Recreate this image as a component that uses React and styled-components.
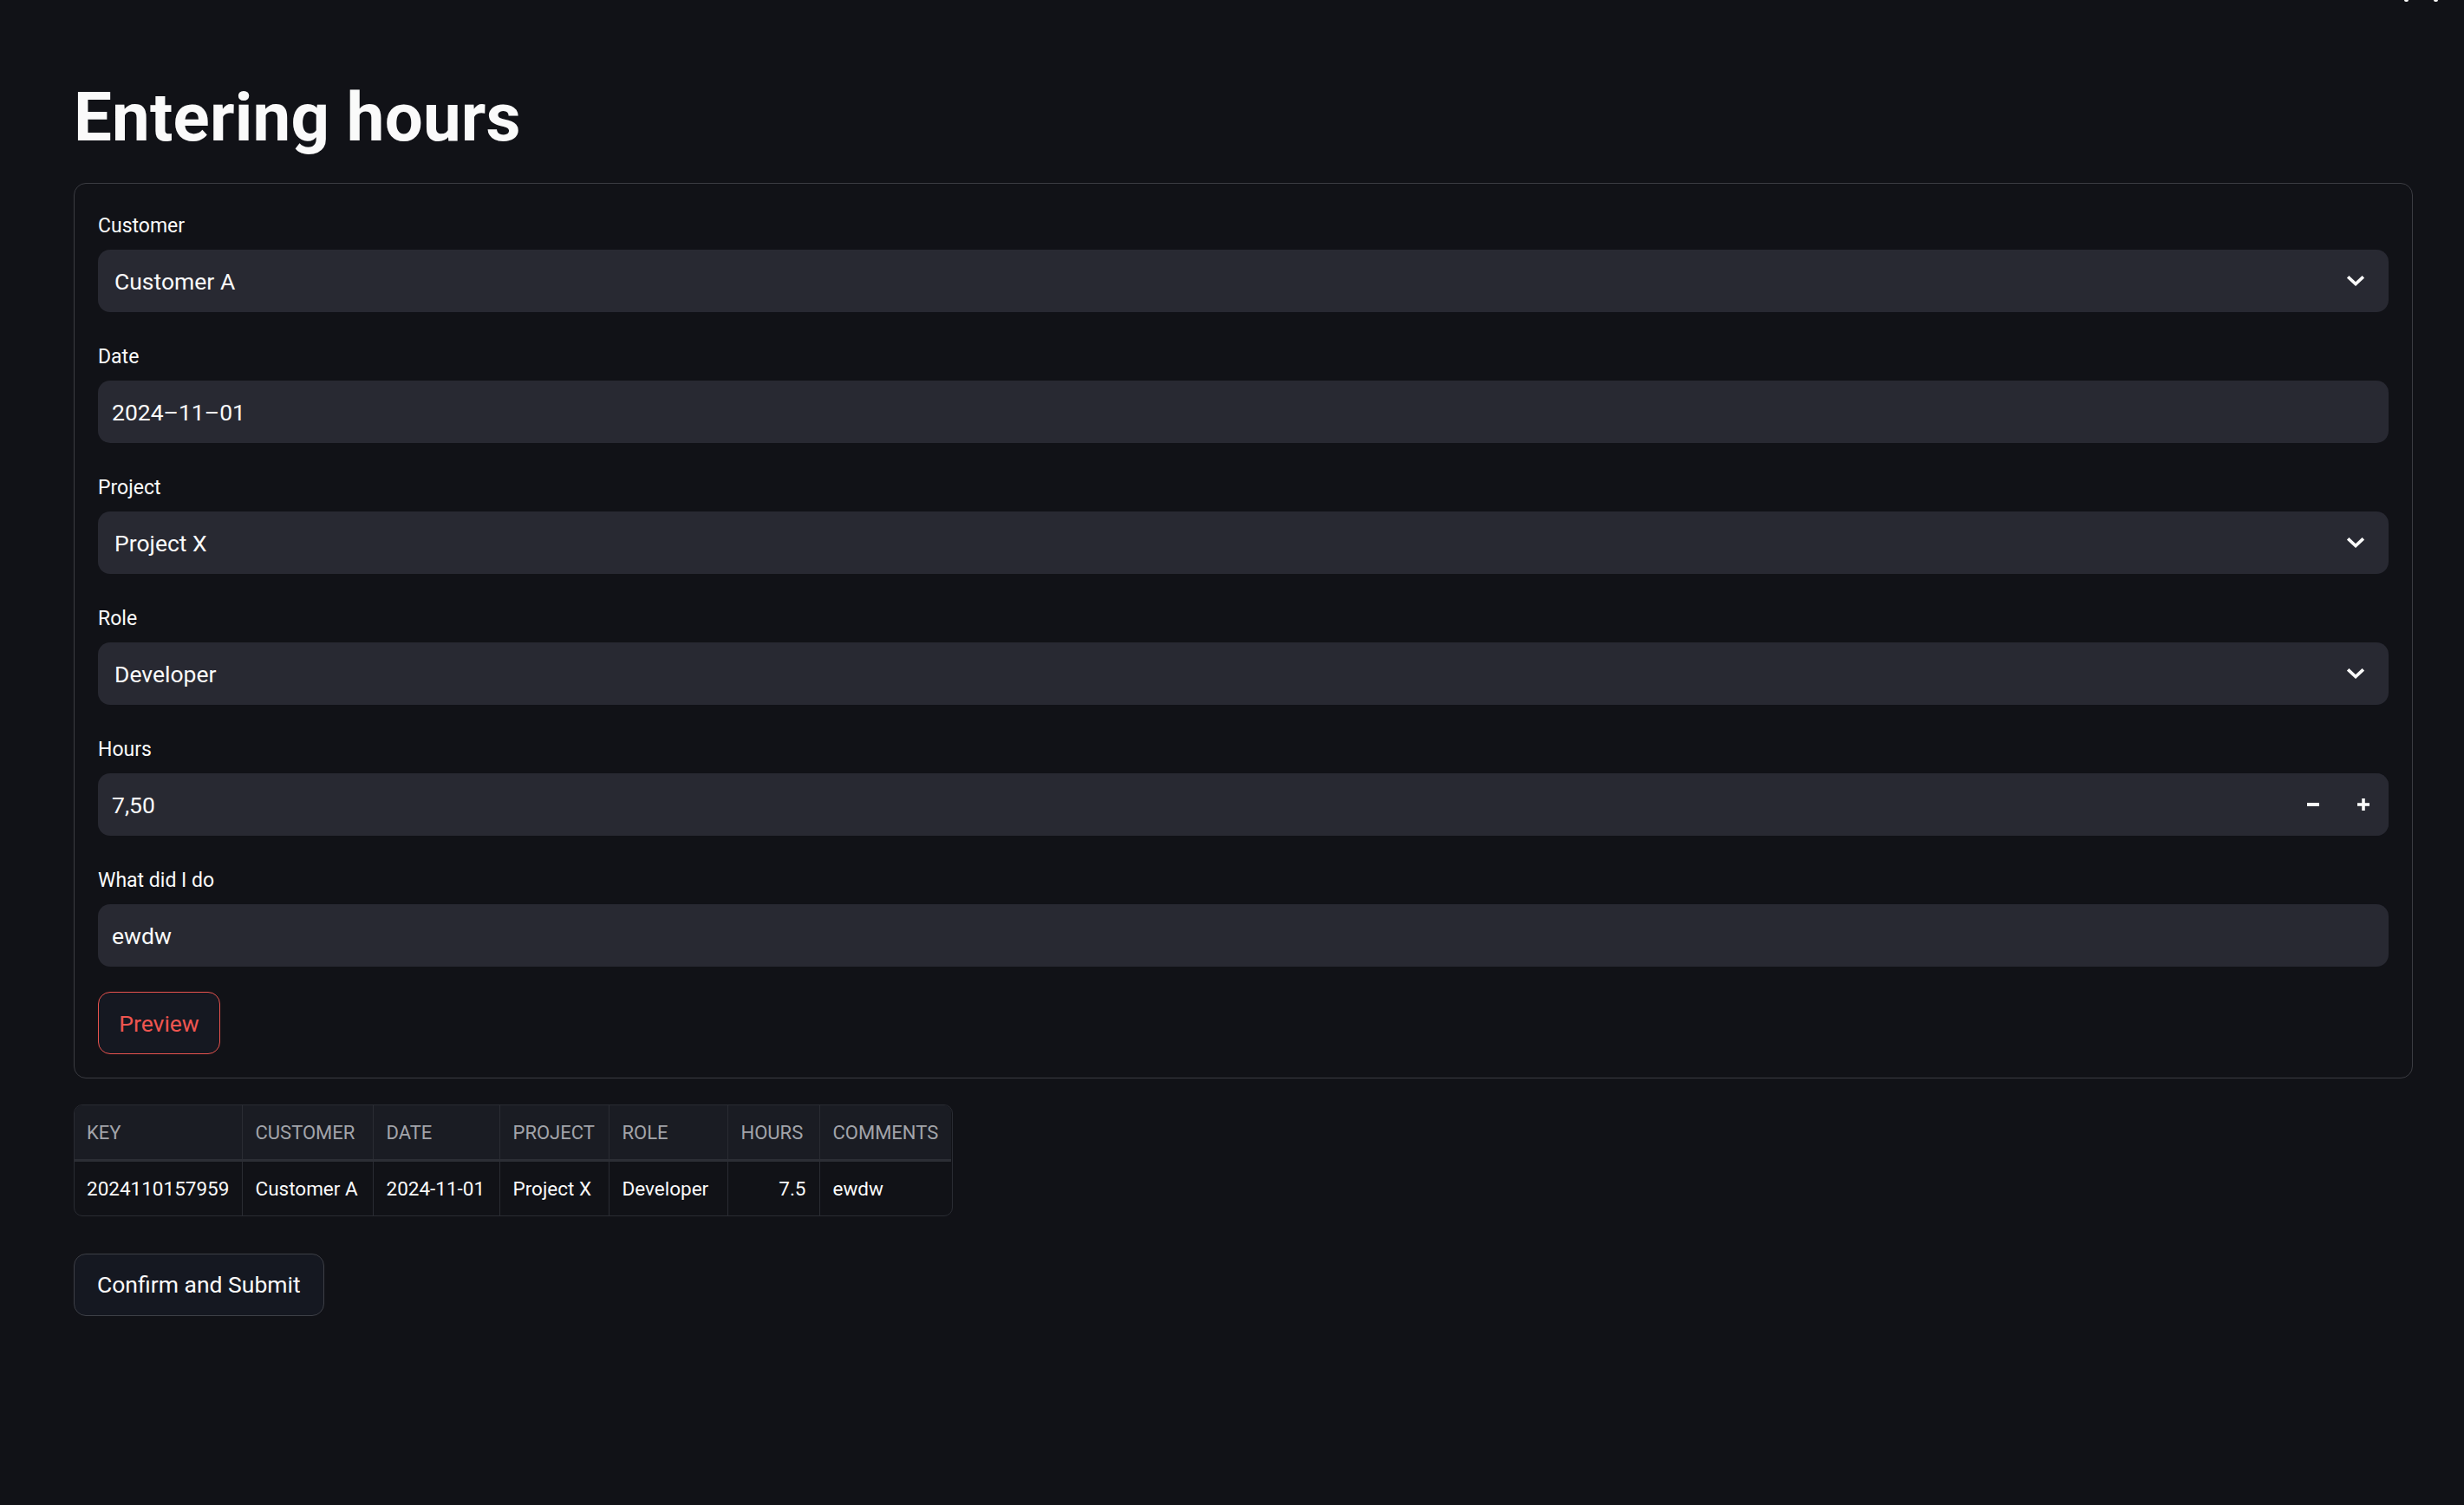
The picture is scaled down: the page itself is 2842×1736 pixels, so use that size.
import styled, { createGlobalStyle } from 'styled-components'

const GlobalStyle = createGlobalStyle`
    html, body {
        margin: 0;
        padding: 0;
        background-color: #111217;
        color: #fafafa;
        font-family: Roboto, "Liberation Sans", sans-serif;
    }
`;

const Page = styled.main`
    min-height: 1736px;
    box-sizing: border-box;
    padding: 89px 59px 0 85px;
`;

const Toolbar = styled.div`
    position: fixed;
    top: 0;
    right: 30px;
    display: flex;
    gap: 29px;

    span {
        width: 5px;
        height: 2px;
        background-color: #fafafa;
        border-radius: 0 0 2px 2px;
    }
`;

const Title = styled.h1`
    margin: 0 0 28px 0;
    font-size: 78px;
    line-height: 94px;
    font-weight: 700;
    letter-spacing: 0.2px;
    color: #fafafa;
`;

const Form = styled.form`
    display: flex;
    flex-direction: column;
    gap: 28px;
    border: 1px solid #3b3c42;
    border-radius: 14px;
    padding: 25px 27px 27px 27px;
`;

const Field = styled.div`
    display: flex;
    flex-direction: column;
`;

const Label = styled.label`
    height: 51px;
    box-sizing: border-box;
    padding-top: 8px;
    font-size: 23px;
    line-height: 32px;
    color: #fafafa;
`;

const InputBox = styled.div`
    display: flex;
    align-items: center;
    height: 72px;
    border-radius: 14px;
    background-color: #282932;
    padding-left: ${p => (p.$select ? '19px' : '16px')};
    font-size: 26.5px;
    color: #fafafa;
    overflow: hidden;
`;

const Value = styled.span`
    flex: 1;
`;

const Chevron = styled.svg`
    width: 20px;
    height: 12px;
    margin-right: 28px;
`;

const StepButton = styled.button`
    width: 58px;
    height: 72px;
    border: none;
    background-color: #282932;
    color: #fafafa;
    display: flex;
    align-items: center;
    justify-content: center;
    padding: 0;

    svg {
        width: 14px;
        height: 14px;
    }
`;

const Button = styled.button`
    align-self: flex-start;
    height: 72px;
    box-sizing: border-box;
    padding: 0 21px;
    border-radius: 14px;
    border: 1px solid ${p => (p.$primary ? '#e8524d' : '#3d3f46')};
    background-color: #151821;
    color: ${p => (p.$primary ? '#ef5550' : '#fafafa')};
    font-family: Roboto, "Liberation Sans", sans-serif;
    font-size: 26.5px;
    cursor: pointer;
`;

const PreviewButton = styled(Button)`
    width: 141px;
    margin-top: 1px;
`;

const TableWrap = styled.div`
    margin-top: 30px;
    width: 1012px;
    border: 1px solid #2a2c33;
    border-radius: 10px;
    overflow: hidden;
`;

const Table = styled.table`
    border-collapse: collapse;
    table-layout: fixed;
    width: 1012px;
    margin: -1px;
    font-size: 22.5px;
`;

const HeadCell = styled.th`
    width: ${p => p.$w}px;
    height: 64px;
    box-sizing: border-box;
    padding: 2px 15px 0 15px;
    text-align: ${p => (p.$right ? 'right' : 'left')};
    font-size: 22px;
    font-weight: 400;
    text-transform: uppercase;
    color: #a2a4aa;
    background-color: #1a1c23;
    border-right: 1px solid #2a2c33;
    border-bottom: 3px solid #2c2e35;
    white-space: nowrap;

    &:last-child {
        border-right: none;
    }
`;

const Cell = styled.td`
    height: 63px;
    padding: 0 15px;
    text-align: ${p => (p.$right ? 'right' : 'left')};
    color: #fafafa;
    border-right: 1px solid #2a2c33;
    white-space: nowrap;

    &:last-child {
        border-right: none;
    }
`;

const SubmitButton = styled(Button)`
    margin-top: 43px;
    padding: 0 26px;
`;

const columns = [
    { key: 'key', label: 'Key', w: 194 },
    { key: 'customer', label: 'Customer', w: 151 },
    { key: 'date', label: 'Date', w: 146 },
    { key: 'project', label: 'Project', w: 126 },
    { key: 'role', label: 'Role', w: 137 },
    { key: 'hours', label: 'Hours', w: 106, right: true },
    { key: 'comments', label: 'Comments', w: 152 },
];

const row = {
    key: '2024110157959',
    customer: 'Customer A',
    date: '2024-11-01',
    project: 'Project X',
    role: 'Developer',
    hours: '7.5',
    comments: 'ewdw',
};

const ChevronDown = () => (
    <Chevron viewBox="0 0 20 12">
        <path d="M2.5 2.5 L10 9.5 L17.5 2.5" fill="none" stroke="#fafafa" strokeWidth="3.6" strokeLinecap="square" />
    </Chevron>
);

const SelectField = ({ label, value }) => (
    <Field>
        <Label>{label}</Label>
        <InputBox $select>
            <Value>{value}</Value>
            <ChevronDown />
        </InputBox>
    </Field>
);

const TextField = ({ label, value }) => (
    <Field>
        <Label>{label}</Label>
        <InputBox>
            <Value>{value}</Value>
        </InputBox>
    </Field>
);

const NumberField = ({ label, value }) => (
    <Field>
        <Label>{label}</Label>
        <InputBox>
            <Value>{value}</Value>
            <StepButton type="button" aria-label="minus">
                <svg viewBox="0 0 14 14"><rect x="0" y="5" width="14" height="4" fill="#fafafa" /></svg>
            </StepButton>
            <StepButton type="button" aria-label="plus">
                <svg viewBox="0 0 14 14">
                    <rect x="0" y="5.2" width="14" height="3.6" fill="#fafafa" />
                    <rect x="5.2" y="0" width="3.6" height="14" fill="#fafafa" />
                </svg>
            </StepButton>
        </InputBox>
    </Field>
);

const App = () => {
    return (
        <>
            <GlobalStyle />
            <Toolbar>
                <span />
                <span />
            </Toolbar>
            <Page>
                <Title>Entering hours</Title>
                <Form onSubmit={e => e.preventDefault()}>
                    <SelectField label="Customer" value="Customer A" />
                    <TextField label="Date" value="2024–11–01" />
                    <SelectField label="Project" value="Project X" />
                    <SelectField label="Role" value="Developer" />
                    <NumberField label="Hours" value="7,50" />
                    <TextField label="What did I do" value="ewdw" />
                    <PreviewButton type="button" $primary>Preview</PreviewButton>
                </Form>
                <TableWrap>
                    <Table>
                        <thead>
                            <tr>
                                {columns.map(c => (
                                    <HeadCell key={c.key} $w={c.w}>{c.label}</HeadCell>
                                ))}
                            </tr>
                        </thead>
                        <tbody>
                            <tr>
                                {columns.map(c => (
                                    <Cell key={c.key} $right={c.right}>{row[c.key]}</Cell>
                                ))}
                            </tr>
                        </tbody>
                    </Table>
                </TableWrap>
                <SubmitButton type="button">Confirm and Submit</SubmitButton>
            </Page>
        </>
    );
};

export default App;
